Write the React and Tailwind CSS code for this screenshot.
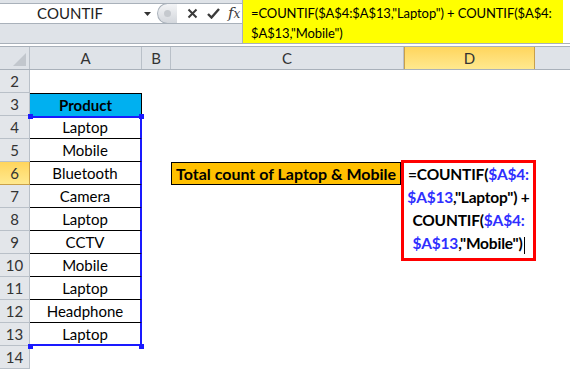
import React from "react";

const font = { fontFamily: "Lato, 'Open Sans', sans-serif" };

const products = ["Laptop", "Mobile", "Bluetooth", "Camera", "Laptop", "CCTV", "Mobile", "Laptop", "Headphone", "Laptop"];

function Handle({ pos }) {
  return <span className={`absolute w-[5px] h-[5px] bg-[#1a1aff] ${pos}`} />;
}

function FormulaEditor() {
  const blue = "text-[#2f2fff]";
  return (
    <div className="absolute left-[-3px] top-[-2px] w-[135px] h-[101px] border-[3px] border-[#ff0000] bg-white z-10 text-center font-bold text-[15.5px] tracking-[-0.2px] leading-[23px] text-black whitespace-nowrap">
      <div>=COUNTIF(<span className={blue}>$A$4:</span></div>
      <div><span className={blue}>$A$13</span>,"Laptop") +</div>
      <div>COUNTIF(<span className={blue}>$A$4:</span></div>
      <div>
        <span className={blue}>$A$13</span>,"Mobile")
        <span className="inline-block w-px h-[17px] bg-black align-middle ml-px" />
      </div>
    </div>
  );
}

function Row({ n }) {
  const active = n === 6;
  let aCell = null;
  if (n === 3) {
    aCell = (
      <div className="w-[112px] h-full bg-[#00b0f0] border-t border-r border-black flex items-center justify-center font-bold text-[15px]">
        Product
      </div>
    );
  } else if (n >= 4 && n <= 13) {
    aCell = (
      <div className={`w-[112px] h-full relative flex items-center justify-center text-[15px] border-r-2 border-r-[#1a1aff] ${n < 13 ? "border-b border-b-black" : ""}`}>
        {products[n - 4]}
        {n === 4 && <div className="absolute left-0 right-[-2px] top-0 h-[2px] bg-[#1a1aff]" />}
        {n === 13 && <div className="absolute left-0 right-[-2px] bottom-0 h-[2px] bg-[#1a1aff]" />}
        {n === 4 && (
          <>
            <Handle pos="left-[-2px] top-[-2px]" />
            <Handle pos="right-[-4px] top-[-2px]" />
          </>
        )}
        {n === 13 && (
          <>
            <Handle pos="left-[-2px] bottom-[-3px]" />
            <Handle pos="right-[-4px] bottom-[-3px]" />
          </>
        )}
      </div>
    );
  } else {
    aCell = <div className="w-[112px] h-full" />;
  }

  return (
    <div className="flex h-[23px]">
      <div
        className={`w-[30px] shrink-0 flex items-center justify-center text-[15px] border-r border-b ${
          active
            ? "bg-gradient-to-b from-[#ffd55c] to-[#ffe98e] border-[#c9a04a] text-[#333]"
            : "bg-[#e3e6ea] border-[#b9c0c8] text-[#333]"
        }`}
      >
        {n}
      </div>
      {aCell}
      <div className="w-[29px]" />
      <div className="w-[233px] h-full">
        {active && (
          <div className="h-full w-[230px] bg-[#ffc000] border border-black flex items-center pl-[4px] font-bold text-[16px] whitespace-nowrap">
            Total count of Laptop &amp; Mobile
          </div>
        )}
      </div>
      <div className="w-[131px] h-full relative">{active && <FormulaEditor />}</div>
      <div className="flex-1" />
    </div>
  );
}

export default function App() {
  const cols = [
    { label: "A", w: "w-[112px]" },
    { label: "B", w: "w-[29px]" },
    { label: "C", w: "w-[233px]" },
    { label: "D", w: "w-[131px]", active: true },
  ];
  const rows = [2, 3, 4, 5, 6, 7, 8, 9, 10, 11, 12, 13, 14];

  return (
    <div className="w-[570px] h-[371px] overflow-hidden bg-white text-black" style={font}>
      {/* Formula bar */}
      <div className="h-[44px] bg-[#dfe3e8] border-b border-[#a9b1ba] flex">
        <div className="w-[155px] h-[21px] mt-[3px] bg-white border-t border-b border-[#a9b1ba] flex items-center relative">
          <span className="w-[140px] text-center text-[15px] text-[#222]">COUNTIF</span>
          <svg className="absolute right-[4px] top-[8px]" width="7" height="4" viewBox="0 0 7 4">
            <path d="M0 0h7L3.5 4z" fill="#333" />
          </svg>
        </div>
        <div className="w-[87px] h-[21px] mt-[3px] bg-white flex items-center border-t border-b border-[#a9b1ba]">
          <div className="w-[20px] h-[21px] rounded-l-full bg-gradient-to-b from-[#f3f4f6] to-[#d3d7dc] border border-[#a9b1ba] border-r-0 flex items-center justify-center ml-[2px]">
            <span className="w-[7px] h-[7px] rounded-full bg-[#c5c9ce]" />
          </div>
          <svg className="ml-[10px]" width="11" height="11" viewBox="0 0 11 11">
            <path d="M1.5 1.5l8 8M9.5 1.5l-8 8" stroke="#3a3a3a" strokeWidth="2" />
          </svg>
          <svg className="ml-[9px]" width="13" height="11" viewBox="0 0 13 11">
            <path d="M1 6l3.5 3.5L12 1" stroke="#3a3a3a" strokeWidth="2.4" fill="none" />
          </svg>
          <span className="ml-[8px] italic text-[15px] text-[#3a3a3a]" style={{ fontFamily: "'DejaVu Serif', serif" }}>
            f<span className="text-[12px]">x</span>
          </span>
        </div>
        <div className="w-[321px] h-[43px] bg-[#ffff00] border-l border-[#a9b1ba] pl-[8px] pt-[3px] text-[13px] tracking-[-0.1px] leading-[20px] text-black whitespace-nowrap overflow-hidden">
          =COUNTIF($A$4:$A$13,"Laptop") + COUNTIF($A$4:
          <br />
          $A$13,"Mobile")
        </div>
        <div className="flex-1 bg-white h-[43px]" />
      </div>

      <div className="h-[3px] bg-white border-b border-[#a9b1ba]" />

      {/* Column headers */}
      <div className="flex h-[23px] bg-[#dfe3e8] border-b border-[#a9b1ba]">
        <div className="w-[30px] shrink-0 border-r border-[#b9c0c8] relative">
          <svg className="absolute right-[3px] bottom-[3px]" width="13" height="13" viewBox="0 0 13 13">
            <path d="M13 0V13H0z" fill="#c2c7cd" />
          </svg>
        </div>
        {cols.map((c) => (
          <div
            key={c.label}
            className={`${c.w} shrink-0 flex items-center justify-center text-[15px] border-r ${
              c.active
                ? "bg-gradient-to-b from-[#ffd55c] to-[#ffe98e] border-[#c9a04a] border-l text-[#333]"
                : "border-[#b9c0c8] text-[#333]"
            }`}
          >
            {c.label}
          </div>
        ))}
        <div className="flex-1" />
      </div>

      {rows.map((n) => (
        <Row key={n} n={n} />
      ))}
    </div>
  );
}
